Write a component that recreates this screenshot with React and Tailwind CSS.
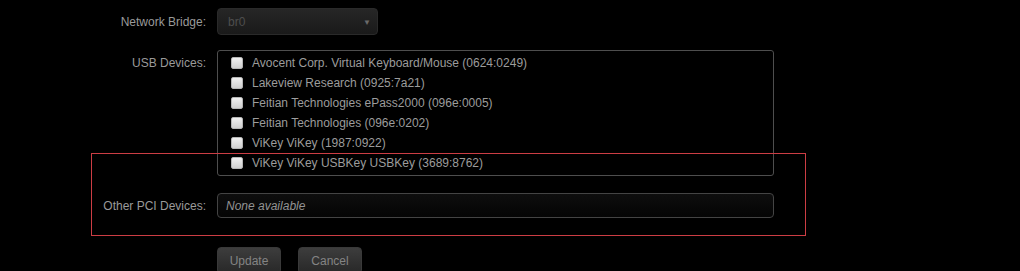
import React from 'react';

const usbDevices = [
    'Avocent Corp. Virtual Keyboard/Mouse (0624:0249)',
    'Lakeview Research (0925:7a21)',
    'Feitian Technologies ePass2000 (096e:0005)',
    'Feitian Technologies (096e:0202)',
    'ViKey ViKey (1987:0922)',
    'ViKey ViKey USBKey USBKey (3689:8762)',
];

const Label = ({ children, className = '' }) => (
    <div className={`w-[207px] shrink-0 text-right pr-[1px] text-[12px] text-[#9a9a9a] ${className}`}>
        {children}
    </div>
);

const App = () => {
    return (
        <div className="relative w-[1020px] h-[271px] overflow-hidden bg-black font-['Liberation_Sans',Arial,sans-serif]">
            <div className="flex flex-col pt-[8px]">
                {/* network bridge */}
                <div className="flex items-center gap-[10px]">
                    <Label>Network Bridge:</Label>
                    <div className="relative w-[161px] h-[27px] rounded-[4px] border border-[#2a2a2a] bg-gradient-to-b from-[#262626] to-[#1a1a1a] flex items-center pl-[10px] text-[12px] text-[#4e4e4e]">
                        br0
                        <span className="absolute right-[6px] top-[8px] text-[8px] text-[#6a6a6a]">▼</span>
                    </div>
                </div>

                {/* usb devices */}
                <div className="flex items-start gap-[10px] mt-[15px]">
                    <Label className="pt-[4px]">USB Devices:</Label>
                    <div className="w-[557px] h-[126px] rounded-[3px] border border-[#4e4e4e] bg-black pt-[2px]">
                        {usbDevices.map((d) => (
                            <div key={d} className="flex items-center h-[20px] pl-[13px]">
                                <span className="w-[12px] h-[12px] rounded-[2px] border border-[#b5b5b5] bg-gradient-to-b from-[#f0f0f0] to-[#d0d0d0]" />
                                <span className="ml-[9px] text-[12px] text-[#9c9c9c]">{d}</span>
                            </div>
                        ))}
                    </div>
                </div>

                {/* other pci */}
                <div className="flex items-center gap-[10px] mt-[17px]">
                    <Label>Other PCI Devices:</Label>
                    <div className="w-[557px] h-[25px] rounded-[4px] border border-[#444444] bg-gradient-to-b from-[#0e0e0e] to-[#050505] flex items-center pl-[8px] text-[12px] italic text-[#939393]">
                        None available
                    </div>
                </div>

                {/* buttons */}
                <div className="flex gap-[17px] pl-[217px] mt-[29px]">
                    <button className="w-[64px] h-[27px] rounded-[4px] border border-[#393939] bg-gradient-to-b from-[#3d3d3d] to-[#282828] text-[12px] text-[#848484]">
                        Update
                    </button>
                    <button className="w-[64px] h-[27px] rounded-[4px] border border-[#393939] bg-gradient-to-b from-[#3d3d3d] to-[#282828] text-[12px] text-[#848484]">
                        Cancel
                    </button>
                </div>
            </div>

            {/* highlight overlay */}
            <div className="absolute left-[91px] top-[153px] w-[715px] h-[83px] border border-[#cc3d44] pointer-events-none" />
        </div>
    );
};

export default App;
